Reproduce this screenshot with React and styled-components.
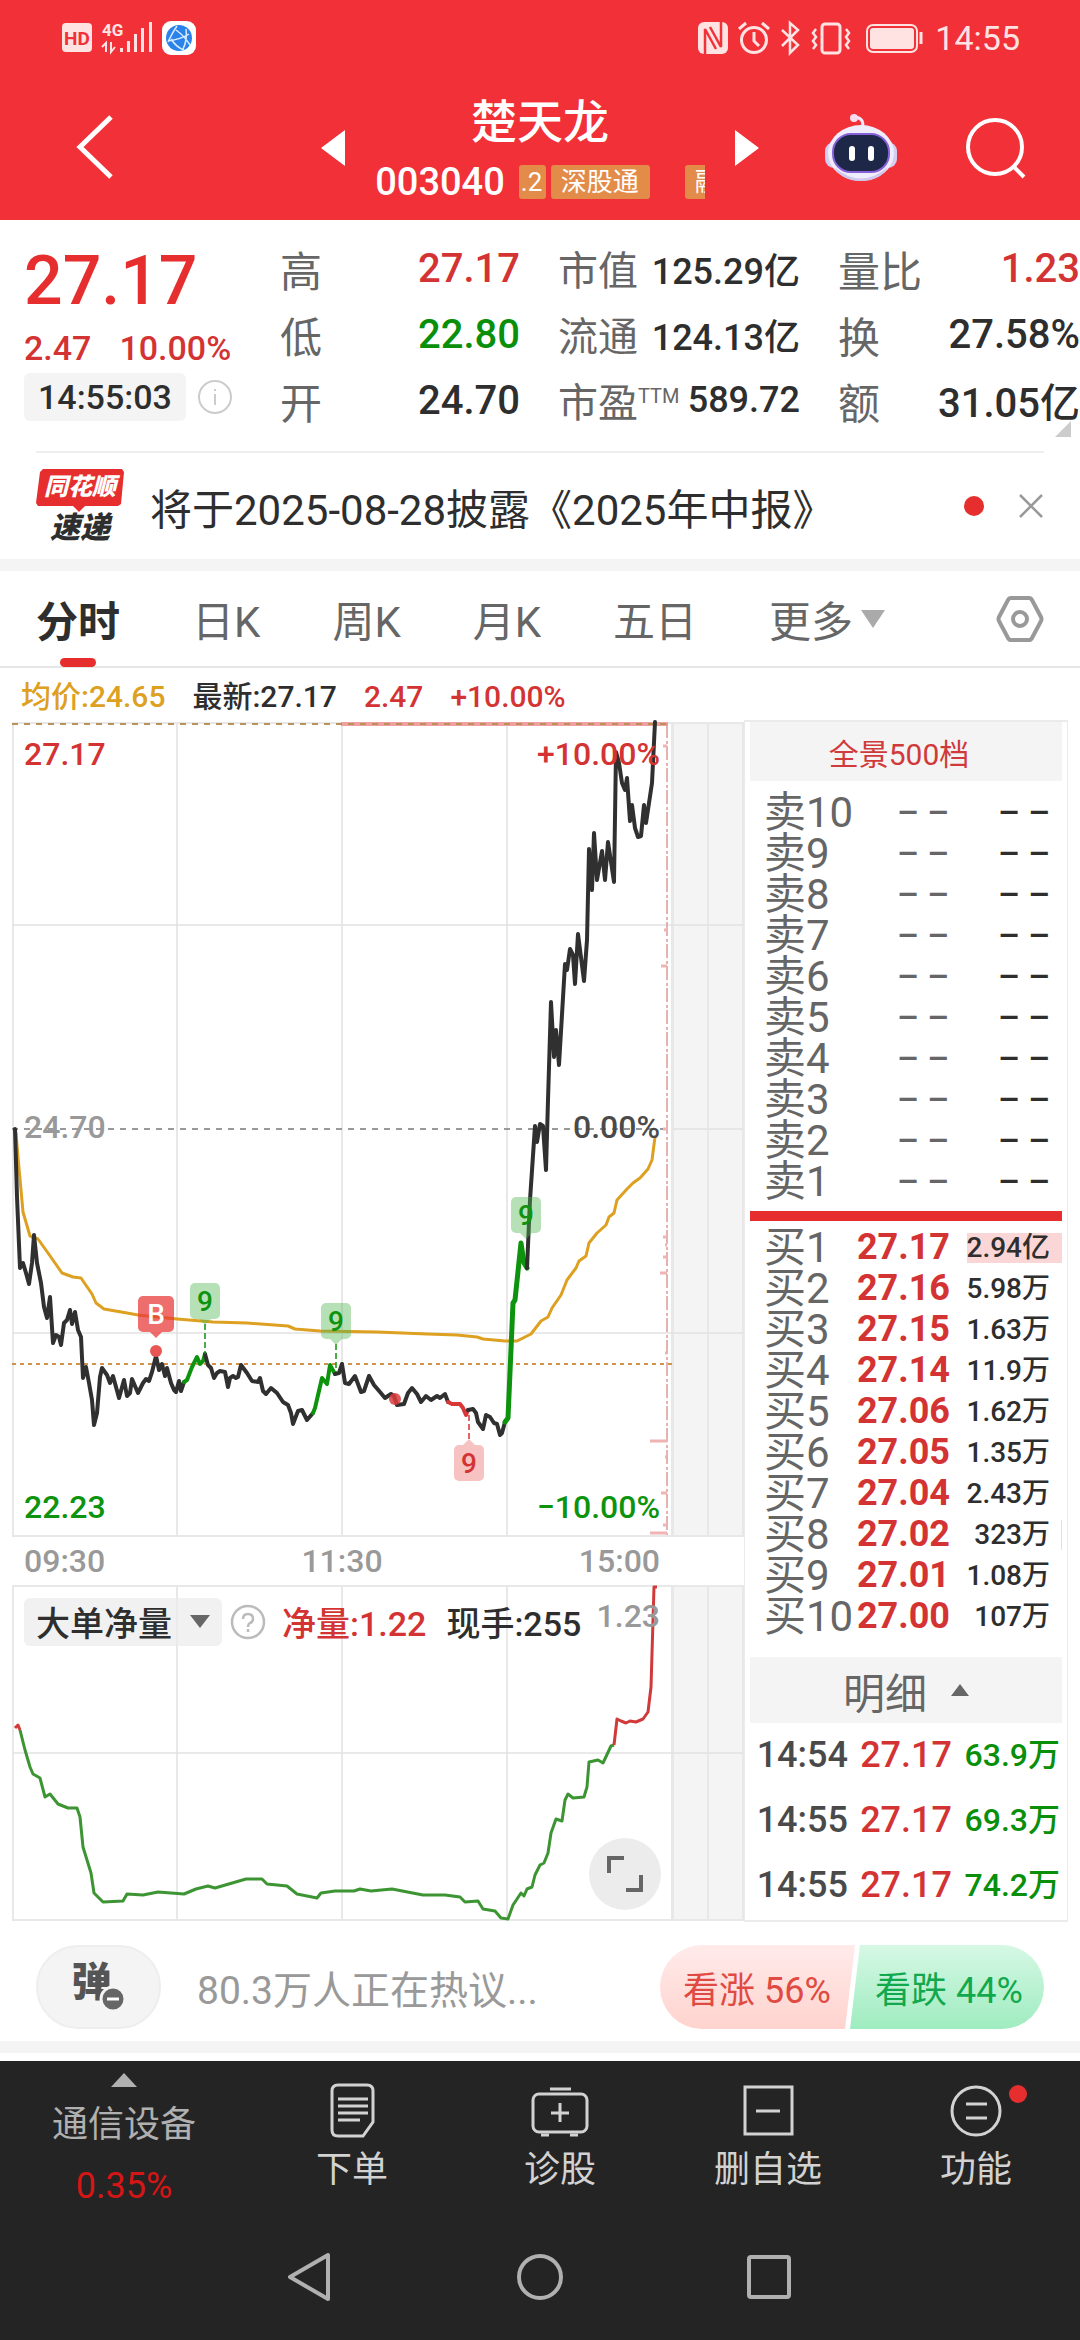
import React from 'react';
import styled, { createGlobalStyle } from 'styled-components';

const GlobalStyle = createGlobalStyle`
    :root {
        --red: #e62e2e;
        --text-red: #d43333;
        --green: #098f09;
        --ink: #2e2e2e;
        --gray: #666;
        --light: #999;
        --panel: #f4f4f4;
        --line: #e6e6e6;
        --gold: #dda020;
        --dark: #242424;
    }
    * {
        box-sizing: border-box;
    }
    body {
        margin: 0;
        background: #fff;
        color: var(--ink);
        font-family: Roboto, 'Noto Sans CJK SC', sans-serif;
    }
    button {
        margin: 0;
        padding: 0;
        border: none;
        background: none;
        color: inherit;
        font: inherit;
        cursor: pointer;
    }
    svg {
        display: block;
    }
`;

const Page = styled.div`
    width: 100%;
    overflow-x: hidden;
`;

/* ---------- header ---------- */

const Header = styled.header`
    background: #f13038;
    color: #fff;
`;
const StatusBar = styled.div`
    display: flex;
    align-items: center;
    justify-content: space-between;
    height: 76px;
    padding: 0 60px;
    color: #ffe3e3;
`;
const StatusGroup = styled.div`
    display: flex;
    align-items: center;
    gap: 10px;
`;
const Clock = styled.span`
    font-size: 34px;
    line-height: 40px;
`;
const TitleBar = styled.div`
    display: grid;
    grid-template-columns: 1fr 438px 1fr;
    align-items: center;
    height: 144px;
    padding: 0 54px;
`;
const BackButton = styled.button`
    justify-self: start;
    padding-left: 18px;
`;
const TitleCenter = styled.div`
    display: flex;
    align-items: center;
    justify-content: space-between;
`;
const StockTitle = styled.div`
    display: flex;
    flex-direction: column;
    align-items: center;
    width: 328px;
    padding-top: 8px;
    h1 {
        margin: 0;
        font-size: 46px;
        line-height: 60px;
        font-weight: 500;
    }
`;
const CodeRow = styled.div`
    display: flex;
    align-items: center;
    gap: 14px;
    font-size: 38px;
    line-height: 60px;
    font-weight: 500;
`;
const TagStrip = styled.div`
    display: flex;
    gap: 5px;
    width: 186px;
    overflow: hidden;
`;
const Tag = styled.span`
    flex: none;
    width: ${(p) => p.$width}px;
    margin-left: ${(p) => p.$before || 0}px;
    padding: 0 ${(p) => p.$pad}px;
    border-radius: 3px;
    background: #e38b48;
    font-size: 26px;
    line-height: 34px;
    font-weight: 400;
    white-space: nowrap;
    overflow: hidden;
`;
const HeaderActions = styled.div`
    display: flex;
    justify-content: flex-end;
    gap: 68px;
`;

/* ---------- quote ---------- */

const Quote = styled.section`
    position: relative;
    display: grid;
    grid-template-columns: 218px 240px 242px 1fr;
    column-gap: 38px;
    padding: 15px 0 18px 24px;
    &::after {
        content: '';
        position: absolute;
        right: 9px;
        bottom: 14px;
        border: 8px solid;
        border-color: transparent #ccc #ccc transparent;
    }
`;
const PriceBlock = styled.div`
    color: var(--text-red);
    font-weight: 500;
`;
const BigPrice = styled.div`
    font-size: 68px;
    line-height: 92px;
    color: var(--red);
`;
const Change = styled.div`
    display: flex;
    gap: 28px;
    font-size: 34px;
    line-height: 42px;
    white-space: nowrap;
`;
const TimeRow = styled.div`
    display: flex;
    align-items: center;
    gap: 12px;
    margin-top: 4px;
`;
const TimeChip = styled.span`
    padding: 0 14px;
    border-radius: 6px;
    background: var(--panel);
    color: var(--ink);
    font-size: 34px;
    line-height: 48px;
`;
const Facts = styled.dl`
    display: grid;
    grid-auto-rows: 66px;
    align-items: center;
    margin: 0;
    div {
        display: flex;
        align-items: center;
        justify-content: space-between;
        white-space: nowrap;
    }
    dt {
        font-size: ${(p) => (p.$small ? 40 : 42)}px;
        color: var(--gray);
    }
    sup {
        font-size: 20px;
        line-height: 20px;
    }
    dd {
        margin: 0;
        font-size: ${(p) => (p.$small ? 36 : 40)}px;
        font-weight: 500;
    }
`;
const Value = styled.dd`
    color: ${(p) => p.$color || 'var(--ink)'};
`;

/* ---------- news strip ---------- */

const News = styled.section`
    display: flex;
    align-items: center;
    height: 108px;
    margin: 0 36px;
    border-top: 2px solid #eee;
`;
const Brand = styled.div`
    width: 88px;
    margin-right: 26px;
    font-style: italic;
    font-weight: 900;
    text-align: center;
`;
const BrandBadge = styled.div`
    height: 44px;
    background: var(--red);
    color: #fff;
    font-size: 24px;
    line-height: 36px;
    clip-path: polygon(
        7px 0,
        86px 0,
        88px 3px,
        85px 35px,
        82px 37px,
        49px 37px,
        43px 43px,
        37px 37px,
        2px 37px,
        0 34px,
        4px 3px
    );
`;
const BrandName = styled.div`
    font-size: 30px;
    line-height: 30px;
`;
const NewsText = styled.p`
    flex: 1;
    margin: 0;
    font-size: 42px;
    white-space: nowrap;
`;
const Dot = styled.span`
    width: ${(p) => p.$size}px;
    height: ${(p) => p.$size}px;
    margin-right: ${(p) => p.$after || 0}px;
    border-radius: 50%;
    background: var(--red);
`;
const Band = styled.div`
    height: 12px;
    background: var(--panel);
`;

/* ---------- tabs ---------- */

const Tabs = styled.nav`
    display: flex;
    align-items: center;
    gap: 72px;
    height: 97px;
    padding: 0 36px;
    border-bottom: 2px solid var(--line);
`;
const Tab = styled.button`
    position: relative;
    display: flex;
    align-items: center;
    gap: 8px;
    height: 96px;
    font-size: 42px;
    font-weight: ${(p) => (p.$active ? 700 : 400)};
    color: ${(p) => (p.$active ? 'var(--ink)' : 'var(--gray)')};
    white-space: nowrap;
    &::after {
        content: '';
        display: ${(p) => (p.$active ? 'block' : 'none')};
        position: absolute;
        left: 24px;
        bottom: 0;
        width: 36px;
        height: 9px;
        border-radius: 5px;
        background: var(--red);
    }
`;
const SettingsButton = styled.button`
    margin-left: auto;
`;
const Caret = styled.i`
    border: ${(p) => p.$size}px solid transparent;
    ${(p) =>
        p.$up
            ? `border-top: 0; border-bottom: ${p.$tall}px solid ${p.$color};`
            : `border-bottom: 0; border-top: ${p.$tall}px solid ${p.$color};`}
`;
const Legend = styled.div`
    display: flex;
    gap: 27px;
    height: 52px;
    padding: 4px 21px 0;
    font-size: 30px;
    line-height: 50px;
    font-weight: 500;
`;
const Colored = styled.span`
    color: ${(p) => p.$color};
`;

/* ---------- charts ---------- */

const Main = styled.main`
    display: grid;
    grid-template-columns: 1fr 324px;
    padding: 0 12px;
`;
const Charts = styled.div`
    min-width: 0;
`;
const ChartSvg = styled.svg`
    width: 100%;
    height: auto;
    text {
        font-size: 32px;
        font-weight: 500;
    }
`;
const TimeAxis = styled.div`
    display: flex;
    justify-content: space-between;
    padding: 0 84px 0 12px;
    font-size: 32px;
    line-height: 46px;
    font-weight: 500;
    color: var(--light);
`;
const FlowBox = styled.div`
    position: relative;
`;
const FlowBar = styled.div`
    position: absolute;
    top: 13px;
    left: 12px;
    display: flex;
    align-items: center;
    gap: 8px;
    font-size: 34px;
    font-weight: 500;
    white-space: nowrap;
`;
const FlowSelect = styled.button`
    display: flex;
    align-items: center;
    justify-content: space-between;
    width: 198px;
    height: 48px;
    padding: 0 12px;
    border-radius: 6px;
    background: rgba(236, 236, 236, 0.75);
`;
const FlowValues = styled.div`
    display: flex;
    gap: 20px;
    margin-left: 8px;
`;
const ExpandButton = styled.button`
    position: absolute;
    right: 83px;
    bottom: 12px;
    display: grid;
    place-items: center;
    width: 72px;
    height: 72px;
    border-radius: 50%;
    background: #ececec;
`;

/* ---------- order book ---------- */

const Book = styled.aside`
    padding: 0 5px;
    border: 1px solid #ebebeb;
    border-width: 2px 1px;
`;
const BookHead = styled.button`
    display: flex;
    align-items: center;
    justify-content: center;
    gap: 24px;
    width: 100%;
    height: ${(p) => p.$height}px;
    background: var(--panel);
    font-size: ${(p) => p.$font}px;
    color: ${(p) => p.$color};
    padding-right: ${(p) => p.$shift || 0}px;
`;
const Spread = styled.div`
    height: 10px;
    background: var(--red);
`;
const BookTable = styled.table`
    width: 100%;
    table-layout: fixed;
    border-collapse: collapse;
    margin: ${(p) => p.$margin};
    td,
    th {
        height: ${(p) => p.$row}px;
        padding: 0;
        line-height: 41px;
        white-space: nowrap;
    }
`;
const Level = styled.th`
    width: 104px;
    font-size: 42px;
    font-weight: 400;
    text-align: left;
    color: var(--gray);
    && {
        padding-left: 14px;
    }
`;
const Dashes = styled.td`
    font-size: 34px;
    font-weight: 500;
    text-align: right;
    color: ${(p) => p.$color};
    && {
        padding-right: ${(p) => p.$right}px;
    }
`;
const BidPrice = styled.td`
    width: 96px;
    font-size: 36px;
    font-weight: 700;
    text-align: right;
    color: var(--text-red);
`;
const BidVolume = styled.td`
    font-size: 28px;
    font-weight: 500;
    text-align: right;
    background: linear-gradient(#fad6d6, #fad6d6) right center / ${(p) => p.$fill || 0}px 30px
        no-repeat;
    && {
        padding-right: 12px;
    }
`;
const TradeCell = styled.td`
    width: ${(p) => p.$width};
    font-size: ${(p) => p.$size}px;
    font-weight: 500;
    text-align: right;
    color: ${(p) => p.$color};
    &&:last-child {
        padding-right: 2px;
    }
`;

/* ---------- discussion row ---------- */

const Talk = styled.section`
    display: flex;
    align-items: center;
    padding: 23px 36px 12px;
`;
const BulletButton = styled.button`
    position: relative;
    width: 125px;
    height: 84px;
    padding: 0 14px 8px 0;
    border: 2px solid #eee;
    border-radius: 42px;
    background: var(--panel);
    color: #555;
    font-size: 40px;
    line-height: 60px;
    font-weight: 900;
    svg {
        position: absolute;
        left: 61px;
        top: 38px;
    }
`;
const TalkLink = styled.a`
    flex: 1;
    margin-left: 36px;
    font-size: 39px;
    color: var(--light);
    text-decoration: none;
`;
const Votes = styled.div`
    display: flex;
`;
const Vote = styled.button`
    width: 200px;
    height: 84px;
    font-size: 36px;
    white-space: nowrap;
    color: ${(p) => (p.$up ? '#e04a42' : '#12a84e')};
    background: ${(p) =>
        p.$up
            ? 'linear-gradient(#ffebea, #ffd3ce)'
            : 'linear-gradient(#d6f8e5, #9fecc0)'};
    border-radius: ${(p) => (p.$up ? '42px 0 0 42px' : '0 42px 42px 0')};
    clip-path: ${(p) =>
        p.$up
            ? 'polygon(0 0, 195px 0, 185px 100%, 0 100%)'
            : 'polygon(16px 0, 100% 0, 100% 100%, 6px 100%)'};
    padding: ${(p) => (p.$up ? '0 6px 0 0' : '0 0 0 10px')};
    & + & {
        margin-left: -16px;
    }
`;

/* ---------- bottom bars ---------- */

const Bottom = styled.footer`
    margin-top: 8px;
    background: var(--dark);
    color: #d2d2d2;
`;
const Actions = styled.nav`
    display: grid;
    grid-template-columns: 248px repeat(4, 1fr);
    height: 152px;
    font-size: 36px;
`;
const Sector = styled.button`
    display: flex;
    flex-direction: column;
    align-items: center;
    padding-top: 12px;
    line-height: 44px;
    color: #b0b0b0;
    span {
        margin-top: 16px;
    }
`;
const Rate = styled.b`
    margin-top: 17px;
    font-weight: 400;
    color: #d41616;
`;
const Action = styled.button`
    position: relative;
    display: flex;
    flex-direction: column;
    align-items: center;
    gap: 4px;
    padding-top: 20px;
    line-height: 50px;
`;
const Notice = styled(Dot)`
    position: absolute;
    top: 24px;
    left: calc(50% + 33px);
`;
const SystemNav = styled.div`
    display: flex;
    align-items: flex-start;
    justify-content: center;
    gap: 180px;
    height: 127px;
    padding-top: 38px;
`;

const SELLS = [10, 9, 8, 7, 6, 5, 4, 3, 2, 1];
const BUYS = [
    ['27.17', '2.94亿', 95],
    ['27.16', '5.98万'],
    ['27.15', '1.63万'],
    ['27.14', '11.9万'],
    ['27.06', '1.62万'],
    ['27.05', '1.35万'],
    ['27.04', '2.43万'],
    ['27.02', '323万', 1],
    ['27.01', '1.08万'],
    ['27.00', '107万'],
];
const TRADES = [
    ['14:54', '27.17', '63.9万'],
    ['14:55', '27.17', '69.3万'],
    ['14:55', '27.17', '74.2万'],
];

// intraday price, split where the sequence signal changes the colour
const PRICE = [
    {
        color: '#303030',
        points:
            '15,1129 17,1197 20,1268 23,1263 26,1273 29,1284 32,1263 34,1235 37,1263 41,1283 44,1307 47,1318 50,1297 53,1343 56,1335 59,1337 61,1345 64,1323 67,1320 70,1310 72,1324 75,1312 78,1330 81,1337 83,1378 86,1367 89,1383 92,1400 94,1425 97,1413 100,1377 102,1368 107,1375 110,1383 113,1376 119,1398 124,1380 127,1396 130,1393 132,1379 138,1393 143,1383 146,1379 149,1381 152,1372 156,1356 159,1370 162,1364 165,1376 167,1368 171,1383 174,1390 176,1392 179,1381 181,1391 184,1382',
    },
    {
        color: '#0d930d',
        points: '184,1382 187,1380 192,1367 197,1357 200,1364 203,1361 205,1354',
    },
    {
        color: '#303030',
        points:
            '205,1354 208,1365 211,1368 214,1378 217,1373 220,1371 225,1372 228,1387 230,1378 233,1376 236,1378 238,1377 241,1365 247,1373 252,1381 258,1382 260,1378 263,1391 266,1394 271,1388 277,1393 283,1402 288,1405 291,1413 293,1424 298,1411 302,1410 307,1420 313,1413',
    },
    {
        color: '#0d930d',
        points: '313,1413 315,1408 322,1378 327,1384 330,1365 335,1374',
    },
    {
        color: '#303030',
        points:
            '335,1374 339,1373 342,1364 345,1383 349,1384 355,1376 361,1392 364,1391 369,1376 374,1385 380,1392 385,1398 391,1394 394,1396 397,1405 404,1404 408,1393 412,1388 417,1394 421,1402 426,1396 431,1400 437,1396 440,1398 445,1394 448,1402',
    },
    { color: '#d93636', points: '448,1402 452,1404 460,1404 463,1408 466,1415 468,1410' },
    {
        color: '#303030',
        points:
            '468,1410 473,1409 476,1413 478,1422 483,1429 486,1415 490,1417 494,1423 497,1424 500,1435 502,1433 505,1422',
    },
    {
        color: '#0d930d',
        width: 5,
        points: '505,1422 508,1418 513,1303 515,1300 521,1243 524,1263 527,1268',
    },
    {
        color: '#303030',
        points:
            '527,1268 530,1200 535,1126 537,1142 540,1124 543,1126 546,1170 548,1100 551,1002 554,1057 556,1030 559,1065 565,964 567,970 570,949 573,955 575,984 578,934 584,981 587,940 589,849 592,890 594,833 597,880 602,851 605,880 608,842 614,882 616,752 619,763 622,783 625,790 627,778 630,821 632,805 635,828 638,837 641,836 644,805 646,823 652,783 655,722',
    },
];
const AVERAGE =
    '16,1133 18,1157 23,1212 30,1236 38,1239 48,1253 55,1263 62,1273 73,1277 81,1278 92,1294 96,1303 104,1309 127,1313 138,1315 177,1319 213,1322 247,1323 288,1326 295,1329 320,1331 377,1332 427,1334 457,1335 477,1337 483,1339 505,1341 517,1341 531,1334 541,1321 548,1317 552,1308 561,1295 567,1280 576,1268 579,1261 586,1256 589,1243 597,1233 606,1225 609,1217 614,1213 617,1200 627,1189 633,1183 640,1178 648,1169 652,1160 655,1137';
const FLOW = [
    ['#d13a3a', '15,1728 18,1725 20,1730'],
    [
        '#3c9432',
        '20,1730 25,1750 30,1767 33,1774 40,1778 45,1797 50,1794 58,1804 68,1808 77,1808 80,1817 83,1847 91,1873 94,1893 103,1902 123,1901 127,1894 143,1895 158,1892 184,1894 196,1889 208,1886 215,1888 246,1879 262,1879 267,1884 287,1886 297,1894 317,1898 321,1893 335,1891 354,1891 360,1889 371,1891 392,1889 423,1895 445,1895 460,1897 465,1902 478,1901 483,1909 495,1911 501,1918 508,1919 513,1905 521,1893 524,1896 527,1889 532,1887 535,1875 540,1865 544,1863 548,1853 551,1833 556,1819 562,1821 565,1800 568,1794 573,1798 584,1797 587,1787 589,1762 598,1760 603,1763 611,1746 614,1745',
    ],
    [
        '#d13a3a',
        '614,1745 617,1719 621,1721 626,1723 630,1721 636,1722 643,1719 648,1712 651,1687 654,1587 657,1587',
    ],
];
// [y, length] of the volume ticks along the right edge
const TICKS = [
    [746, 4], [930, 3], [966, 6], [1129, 4], [1237, 4], [1245, 2], [1257, 4], [1273, 7],
    [1353, 2], [1441, 17], [1457, 2], [1493, 6], [1525, 4], [1533, 17],
];

const Grid = ({ top, bottom, rows }) => (
    <g fill="none" stroke="#e8e8e8" strokeWidth="2">
        <rect x="673" y={top} width="70" height={bottom - top} fill="#f4f4f4" />
        <path d={`M708 ${top}V${bottom}`} />
        <rect x="13" y={top} width="659" height={bottom - top} />
        {[177, 342, 507].map((x) => (
            <path key={x} d={`M${x} ${top}V${bottom}`} />
        ))}
        {rows.map((y) => (
            <path key={y} d={`M13 ${y}H743`} stroke="#e2e2e2" strokeWidth="1.5" />
        ))}
    </g>
);

const Flag = ({ x, y, up, half = 15, fill, color, label, to }) => (
    <g>
        {to && (
            <path
                d={`M${x} ${up ? y - 6 : y + 41}V${to}`}
                stroke={color}
                strokeWidth="1.5"
                strokeDasharray="6 3"
            />
        )}
        <rect x={x - half} y={y} width={half * 2} height="36" rx="5" fill={fill} />
        <path
            d={up ? `M${x - 6} ${y}l6 -6l6 6z` : `M${x - 6} ${y + 36}l6 6l6 -6z`}
            fill={fill}
        />
        <text x={x} y={y + 28} textAnchor="middle" fill={color} style={{ fontSize: 28 }}>
            {label}
        </text>
    </g>
);

const PriceChart = () => (
    <ChartSvg viewBox="12 720 732 818" role="img" aria-label="分时">
        <Grid top={723} bottom={1536} rows={[925, 1333]} />
        <path d="M673 1129H743" stroke="#e2e2e2" strokeWidth="1.5" />
        <path d="M341 724H668" stroke="#f0a0a0" strokeWidth="4" />
        <path d="M12 724H668" stroke="#b9925a" strokeWidth="2" strokeDasharray="6 6" />
        <path d="M12 1129H668" stroke="#999" strokeWidth="2" strokeDasharray="6 6" />
        <path d="M12 1364H673" stroke="#cf9448" strokeWidth="2" strokeDasharray="4 4" />
        <path d="M667 724V1535" stroke="#d99" strokeWidth="1.5" strokeDasharray="14 3 3 2" />
        {TICKS.map(([y, len]) => (
            <path key={y} d={`M667 ${y}h-${len}`} stroke="#f0b3b3" strokeWidth="3" />
        ))}
        <text x="24" y="1138" fill="#999">
            24.70
        </text>
        <g fill="none" strokeLinejoin="round" strokeLinecap="round">
            <polyline points={AVERAGE} stroke="#dda020" strokeWidth="3" />
            {PRICE.map((part) => (
                <polyline
                    key={part.points}
                    points={part.points}
                    stroke={part.color}
                    strokeWidth={part.width || 4}
                />
            ))}
        </g>
        <circle cx="156" cy="1351" r="6" fill="#e95555" />
        <circle cx="395" cy="1399" r="6" fill="#dc3c3c" fillOpacity="0.85" />
        <Flag x={156} y={1296} half={18} fill="rgba(232, 52, 52, 0.72)" color="#fff" label="B" />
        <Flag x={205} y={1283} fill="rgba(80, 180, 80, 0.42)" color="#0d930d" label="9" to={1354} />
        <Flag x={336} y={1303} fill="rgba(80, 180, 80, 0.42)" color="#0d930d" label="9" to={1372} />
        <Flag x={526} y={1197} fill="rgba(80, 180, 80, 0.42)" color="#0d930d" label="9" />
        <Flag x={469} y={1445} up fill="rgba(236, 120, 120, 0.45)" color="#d43333" label="9" to={1415} />
        <text x="24" y="765" fill="#d43333">
            27.17
        </text>
        <text x="24" y="1518" fill="#0d930d">
            22.23
        </text>
        <g textAnchor="end">
            <text x="660" y="765" fill="#d43333">
                +10.00%
            </text>
            <text x="660" y="1138" fill="#4a4a4a">
                0.00%
            </text>
            <text x="660" y="1518" fill="#0d930d">
                −10.00%
            </text>
        </g>
    </ChartSvg>
);

const FlowChart = () => (
    <ChartSvg viewBox="12 1584 732 338" role="img" aria-label="大单净量">
        <Grid top={1586} bottom={1920} rows={[1753]} />
        {FLOW.map(([color, points]) => (
            <polyline
                key={points}
                points={points}
                fill="none"
                stroke={color}
                strokeWidth="3"
                strokeLinejoin="round"
            />
        ))}
        <text x="660" y="1627" textAnchor="end" fill="#999">
            1.23
        </text>
    </ChartSvg>
);

const StatusLeft = () => (
    <svg width="138" height="36" viewBox="0 0 138 36" fill="#ffe3e3">
        <rect x="2" y="3" width="30" height="29" rx="4" />
        <text x="17" y="25" textAnchor="middle" fontSize="19" fontWeight="700" fill="#f13038">
            HD
        </text>
        <text x="42" y="16" fontSize="17" fontWeight="700">
            4G
        </text>
        <path d="M46 32V23l-4 4M51 22v10l4-5" fill="none" stroke="#ffe3e3" strokeWidth="2" />
        <path d="M60 28h3v4h-3zM67 21h3v11h-3zM74 14h3v18h-3zM81 8h3v24h-3zM89 2h3v30h-3z" />
        <rect x="102" y="1" width="34" height="34" rx="9" fill="#fff" />
        <circle cx="119" cy="18" r="13" fill="#2b83ea" />
        <path
            d="M117 6c-5 7-6 10-9 16M116 10c7 5 11 10 14 15M108 21c8-1 15-3 21-7M111 19c4 6 7 9 13 11M126 9c1 7 0 14-3 20"
            fill="none"
            stroke="#d9ecff"
            strokeWidth="1.5"
        />
    </svg>
);

const StatusIcons = () => (
    <svg width="228" height="36" viewBox="2 0 228 36" fill="none" stroke="#ffe3e3" strokeWidth="3">
        <rect x="3" y="2" width="30" height="32" rx="6" fill="#ffe3e3" stroke="none" />
        <path d="M10 36V9l11 20M26 0v27L15 7" stroke="#f13038" strokeWidth="2.5" />
        <circle cx="59" cy="20" r="12.5" />
        <path d="M59 12v9l5 5M44 9l7-6M74 9l-7-6" />
        <path d="M87 10l16 15-8 8V3l8 7-16 16" strokeWidth="2.5" />
        <rect x="127" y="4" width="18" height="29" rx="3" />
        <path d="M121 9l-3 4 3 4-3 4 3 4-3 4M151 9l3 4-3 4 3 4-3 4 3 4" strokeWidth="2.5" />
        <rect x="172" y="5" width="50" height="27" rx="6" strokeWidth="2" />
        <rect x="175" y="8" width="44" height="21" rx="3" fill="#ffe3e3" stroke="none" />
        <path d="M226 12v12" />
    </svg>
);

const Robot = () => (
    <svg width="74" height="70" viewBox="0 0 74 70">
        <path d="M39 14c0-6-1-9-8-10" fill="none" stroke="#eee9fb" strokeWidth="3" />
        <circle cx="30" cy="5" r="4" fill="#f6dcee" />
        <rect x="1" y="29" width="72" height="26" rx="9" fill="#d5cdf2" />
        <ellipse cx="37" cy="40" rx="33" ry="28" fill="#efedfb" />
        <path d="M10 54q27 23 54 0-8 14-27 14T10 54z" fill="#cfc8ee" />
        <rect x="9" y="21" width="56" height="38" rx="18" fill="#1d2747" stroke="#8560d8" strokeWidth="2" />
        <rect x="25" y="33" width="6" height="15" rx="3" fill="#fff" />
        <rect x="44" y="33" width="6" height="15" rx="3" fill="#fff" />
    </svg>
);

const ACTIONS = [
    {
        label: '下单',
        icon: (
            <>
                <path d="M10 4h29q6 0 6 6v31L35 55H10q-6 0-6-6V10q0-6 6-6z" />
                <path d="M10 18h30M10 25h30M10 32h30M10 39h22" />
            </>
        ),
    },
    {
        label: '诊股',
        icon: (
            <>
                <rect x="-3" y="13" width="54" height="38" rx="6" />
                <path d="M14 8h21M24 22v19M15 32h18M5 54h8M34 54h8" />
            </>
        ),
    },
    {
        label: '删自选',
        icon: (
            <>
                <rect x="1" y="6" width="47" height="47" />
                <path d="M12 30h24" />
            </>
        ),
    },
    {
        label: '功能',
        notice: true,
        icon: (
            <>
                <circle cx="24" cy="30" r="24" />
                <path d="M14 23h21M14 37h21" />
            </>
        ),
    },
];

export default function App() {
    return (
        <Page>
            <GlobalStyle />
            <Header>
                <StatusBar>
                    <StatusLeft />
                    <StatusGroup>
                        <StatusIcons />
                        <Clock>14:55</Clock>
                    </StatusGroup>
                </StatusBar>
                <TitleBar>
                    <BackButton aria-label="返回">
                        <svg width="44" height="68" viewBox="0 0 44 68" fill="none" stroke="#fff" strokeWidth="5">
                            <path d="M39 3L8 33l31 30" />
                        </svg>
                    </BackButton>
                    <TitleCenter>
                        <button aria-label="上一只">
                            <svg width="24" height="36" fill="#fff">
                                <path d="M24 0v36L0 18z" />
                            </svg>
                        </button>
                        <StockTitle>
                            <h1>楚天龙</h1>
                            <CodeRow>
                                003040
                                <TagStrip>
                                    <Tag $width={27} $pad={2}>
                                        .2
                                    </Tag>
                                    <Tag $width={99} $pad={10}>
                                        深股通
                                    </Tag>
                                    <Tag $width={99} $pad={10} $before={30}>
                                        融资
                                    </Tag>
                                </TagStrip>
                            </CodeRow>
                        </StockTitle>
                        <button aria-label="下一只">
                            <svg width="24" height="36" fill="#fff">
                                <path d="M0 0v36l24-18z" />
                            </svg>
                        </button>
                    </TitleCenter>
                    <HeaderActions>
                        <button aria-label="助手">
                            <Robot />
                        </button>
                        <button aria-label="搜索">
                            <svg width="60" height="62" viewBox="0 0 60 62" fill="none" stroke="#fff" strokeWidth="4">
                                <circle cx="29" cy="30" r="27" />
                                <path d="M47 49l11 11" />
                            </svg>
                        </button>
                    </HeaderActions>
                </TitleBar>
            </Header>

            <Quote>
                <PriceBlock>
                    <BigPrice>27.17</BigPrice>
                    <Change>
                        <span>2.47</span>
                        <span>10.00%</span>
                    </Change>
                    <TimeRow>
                        <TimeChip>14:55:03</TimeChip>
                        <svg width="34" height="34" viewBox="0 0 34 34" fill="none" stroke="#ccc" strokeWidth="2">
                            <circle cx="17" cy="17" r="16" />
                            <path d="M17 14v11M17 9v2" />
                        </svg>
                    </TimeRow>
                </PriceBlock>
                <Facts>
                    <div>
                        <dt>高</dt>
                        <Value $color="var(--text-red)">27.17</Value>
                    </div>
                    <div>
                        <dt>低</dt>
                        <Value $color="var(--green)">22.80</Value>
                    </div>
                    <div>
                        <dt>开</dt>
                        <Value>24.70</Value>
                    </div>
                </Facts>
                <Facts $small>
                    <div>
                        <dt>市值</dt>
                        <Value>125.29亿</Value>
                    </div>
                    <div>
                        <dt>流通</dt>
                        <Value>124.13亿</Value>
                    </div>
                    <div>
                        <dt>
                            市盈<sup>TTM</sup>
                        </dt>
                        <Value>589.72</Value>
                    </div>
                </Facts>
                <Facts>
                    <div>
                        <dt>量比</dt>
                        <Value $color="var(--text-red)">1.23</Value>
                    </div>
                    <div>
                        <dt>换</dt>
                        <Value>27.58%</Value>
                    </div>
                    <div>
                        <dt>额</dt>
                        <Value>31.05亿</Value>
                    </div>
                </Facts>
            </Quote>

            <News>
                <Brand>
                    <BrandBadge>同花顺</BrandBadge>
                    <BrandName>速递</BrandName>
                </Brand>
                <NewsText>将于2025-08-28披露《2025年中报》</NewsText>
                <Dot $size={20} $after={34} />
                <button aria-label="关闭">
                    <svg width="26" height="26" viewBox="0 0 26 26" stroke="#999" strokeWidth="2.5">
                        <path d="M2 2l22 22M24 2L2 24" />
                    </svg>
                </button>
            </News>
            <Band />

            <Tabs>
                <Tab $active>分时</Tab>
                <Tab>日K</Tab>
                <Tab>周K</Tab>
                <Tab>月K</Tab>
                <Tab>五日</Tab>
                <Tab>
                    更多
                    <Caret $size={12} $tall={18} $color="#aaa" />
                </Tab>
                <SettingsButton aria-label="设置">
                    <svg width="48" height="46" viewBox="0 0 48 46" fill="none" stroke="#999" strokeWidth="4">
                        <path d="M15 2h18q2 0 3 2l9 17q1 2 0 4l-9 17q-1 2-3 2H15q-2 0-3-2L3 25q-1-2 0-4l9-17q1-2 3-2z" />
                        <circle cx="24" cy="23" r="7" />
                    </svg>
                </SettingsButton>
            </Tabs>

            <Legend>
                <Colored $color="var(--gold)">均价:24.65</Colored>
                <span>最新:27.17</span>
                <Colored $color="var(--text-red)">2.47</Colored>
                <Colored $color="var(--text-red)">+10.00%</Colored>
            </Legend>

            <Main>
                <Charts>
                    <PriceChart />
                    <TimeAxis>
                        <span>09:30</span>
                        <span>11:30</span>
                        <span>15:00</span>
                    </TimeAxis>
                    <FlowBox>
                        <FlowChart />
                        <FlowBar>
                            <FlowSelect>
                                大单净量
                                <Caret $size={10} $tall={13} $color="#666" />
                            </FlowSelect>
                            <svg width="36" height="36" viewBox="0 0 36 36" fill="none" stroke="#bbb" strokeWidth="2.5">
                                <circle cx="18" cy="18" r="16" />
                                <path d="M13 15q0-5 5-5t5 5q0 3-3 4-2 1-2 4M18 25v3" />
                            </svg>
                            <FlowValues>
                                <Colored $color="var(--text-red)">净量:1.22</Colored>
                                <span>现手:255</span>
                            </FlowValues>
                        </FlowBar>
                        <ExpandButton aria-label="展开">
                            <svg width="38" height="38" viewBox="0 0 38 38" fill="none" stroke="#666" strokeWidth="4">
                                <path d="M3 18V3h15M35 20v15H20" />
                            </svg>
                        </ExpandButton>
                    </FlowBox>
                </Charts>

                <Book>
                    <BookHead $height={59} $font={30} $color="#d03a3a" $shift={14}>
                        全景500档
                    </BookHead>
                    <BookTable $row={41} $margin="11px 0 9px">
                        <tbody>
                            {SELLS.map((n) => (
                                <tr key={n}>
                                    <Level scope="row">卖{n}</Level>
                                    <Dashes $color="#666" $right={9}>
                                        – –
                                    </Dashes>
                                    <Dashes $color="#2e2e2e" $right={12}>
                                        – –
                                    </Dashes>
                                </tr>
                            ))}
                        </tbody>
                    </BookTable>
                    <Spread />
                    <BookTable $row={41} $margin="6px 0 20px">
                        <tbody>
                            {BUYS.map(([price, volume, fill], i) => (
                                <tr key={price}>
                                    <Level scope="row">买{i + 1}</Level>
                                    <BidPrice>{price}</BidPrice>
                                    <BidVolume $fill={fill}>{volume}</BidVolume>
                                </tr>
                            ))}
                        </tbody>
                    </BookTable>
                    <BookHead $height={66} $font={42} $color="#666">
                        明细
                        <Caret $up $size={9} $tall={12} $color="#666" />
                    </BookHead>
                    <BookTable $row={65} $margin="0">
                        <tbody>
                            {TRADES.map(([time, price, volume]) => (
                                <tr key={volume}>
                                    <TradeCell $width="98px" $size={36} $color="#4a4a4a">
                                        {time}
                                    </TradeCell>
                                    <TradeCell $width="104px" $size={36} $color="var(--text-red)">
                                        {price}
                                    </TradeCell>
                                    <TradeCell $size={32} $color="var(--green)">
                                        {volume}
                                    </TradeCell>
                                </tr>
                            ))}
                        </tbody>
                    </BookTable>
                </Book>
            </Main>

            <Talk>
                <BulletButton>
                    弹
                    <svg width="28" height="28" viewBox="0 0 28 28">
                        <circle cx="14" cy="14" r="12" fill="#666" stroke="#f4f4f4" strokeWidth="3" />
                        <path d="M8 14h12" stroke="#fff" strokeWidth="3" />
                    </svg>
                </BulletButton>
                <TalkLink href="#talk">80.3万人正在热议...</TalkLink>
                <Votes>
                    <Vote $up>看涨 56%</Vote>
                    <Vote>看跌 44%</Vote>
                </Votes>
            </Talk>
            <Band />

            <Bottom>
                <Actions>
                    <Sector>
                        <Caret $up $size={13} $tall={14} $color="#b0b0b0" />
                        <span>通信设备</span>
                        <Rate>0.35%</Rate>
                    </Sector>
                    {ACTIONS.map((action) => (
                        <Action key={action.label}>
                            <svg
                                width="58"
                                height="60"
                                viewBox="-5 0 58 60"
                                fill="none"
                                stroke="#d2d2d2"
                                strokeWidth="3"
                            >
                                {action.icon}
                            </svg>
                            {action.label}
                            {action.notice && <Notice $size={18} />}
                        </Action>
                    ))}
                </Actions>
                <SystemNav>
                    <button aria-label="后退">
                        <svg width="50" height="52" viewBox="0 0 50 52" fill="none" stroke="#b0b0b0" strokeWidth="4" strokeLinejoin="round">
                            <path d="M42 4v44L4 26z" />
                        </svg>
                    </button>
                    <button aria-label="主屏幕">
                        <svg width="48" height="52" viewBox="0 0 48 52" fill="none" stroke="#b0b0b0" strokeWidth="4">
                            <circle cx="24" cy="26" r="21" />
                        </svg>
                    </button>
                    <button aria-label="最近任务">
                        <svg width="50" height="52" viewBox="0 0 50 52" fill="none" stroke="#b0b0b0" strokeWidth="4">
                            <rect x="5" y="6" width="40" height="40" rx="2" />
                        </svg>
                    </button>
                </SystemNav>
            </Bottom>
        </Page>
    );
}
